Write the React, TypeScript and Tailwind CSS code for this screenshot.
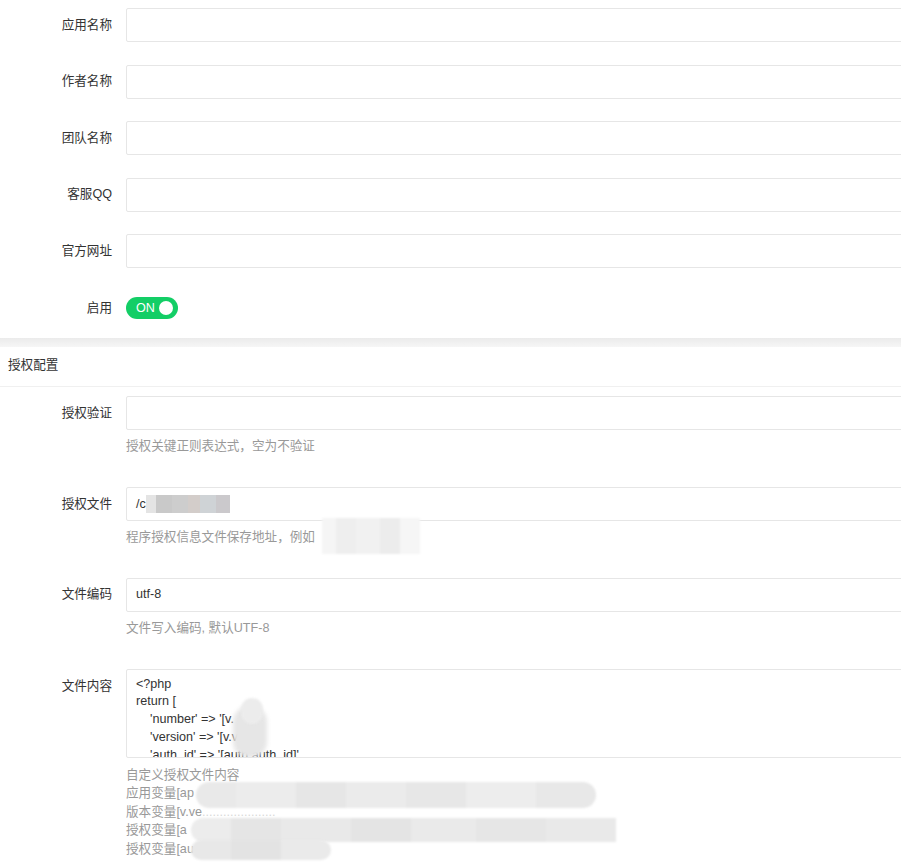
import React from "react";

const FONT = { fontFamily: '"Liberation Sans", "Noto Sans CJK SC", sans-serif' };

function Row({ label, value, children }: { label: string; value?: string; children?: React.ReactNode }) {
  return (
    <div className="flex items-center h-[34px]">
      <div className="w-[126px] shrink-0 pr-[14px] text-right text-[12.6px] text-[#333]">{label}</div>
      <div className="relative h-[34px] w-[800px] shrink-0 rounded-[2px] border border-[#e6e6e6] bg-white pl-[9px] flex items-center text-[12.6px] text-[#333]">
        {value}
        {children}
      </div>
    </div>
  );
}

function Help({ children }: { children: React.ReactNode }) {
  return <div className="relative ml-[126px] mt-[7px] h-[18px] leading-[18px] text-[12.6px] text-[#999]">{children}</div>;
}

export default function App() {
  return (
    <div className="w-[901px] h-[865px] overflow-hidden bg-[#f2f2f2]" style={FONT}>
      {/* basic info card */}
      <div className="bg-white pt-[8px] pb-[13.5px]">
        <div className="flex flex-col gap-[22.6px]">
          <Row label="应用名称" />
          <Row label="作者名称" />
          <Row label="团队名称" />
          <Row label="客服QQ" />
          <Row label="官方网址" />
          <div className="flex items-center h-[34px]">
            <div className="w-[126px] shrink-0 pr-[14px] text-right text-[12.6px] text-[#333]">启用</div>
            <div className="flex items-center h-[22px] w-[52px] rounded-full bg-[#13ce66] pl-[10px] pr-[5px]">
              <span className="text-[12.6px] text-white leading-none">ON</span>
              <span className="ml-auto h-[14px] w-[14px] rounded-full bg-white" />
            </div>
          </div>
        </div>
      </div>
      <div className="h-[9px] bg-gradient-to-b from-[#ebebeb] to-[#f6f6f6]" />
      {/* auth config card */}
      <div className="bg-white h-[520px]">
        <div className="h-[40px] flex items-center pl-[8px] pb-[3px] border-b border-[#f0f0f0] text-[12.6px] text-[#333]">授权配置</div>
        <div className="pt-[9px]">
          <Row label="授权验证" />
          <Help>授权关键正则表达式，空为不验证</Help>
          <div className="h-[31.7px]" />
          <Row label="授权文件">
            <span>/c</span>
            <span className="flex h-[18px] blur-[0.5px]">
              <span className="w-[10px] bg-[#e4e4e4]" />
              <span className="w-[16px] bg-[#c9c9c9]" />
              <span className="w-[16px] bg-[#cdcdcd]" />
              <span className="w-[12px] bg-[#d3cdca]" />
              <span className="w-[16px] bg-[#cfd3d6]" />
              <span className="w-[14px] bg-[#cbc9cc]" />
            </span>
          </Row>
          <Help>
            程序授权信息文件保存地址，例如
            <span className="absolute left-[196px] top-[-10px] flex h-[36px] w-[98px] blur-[1px]">
              <span className="w-[14px] bg-[#f5f5f5]" />
              <span className="w-[20px] bg-[#eeeeee]" />
              <span className="w-[24px] bg-[#f1f1f1]" />
              <span className="w-[20px] bg-[#ececec]" />
              <span className="w-[20px] bg-[#f6f6f6]" />
            </span>
          </Help>
          <div className="h-[31.7px]" />
          <Row label="文件编码" value="utf-8" />
          <Help>文件写入编码, 默认UTF-8</Help>
          <div className="h-[31.7px]" />
          <div className="flex items-start">
            <div className="w-[126px] shrink-0 pr-[14px] pt-[8px] text-right text-[12.6px] leading-[18px] text-[#333]">文件内容</div>
            <div className="relative h-[89px] w-[800px] shrink-0 overflow-hidden rounded-[2px] border border-[#e6e6e6] bg-white pl-[9px] pt-[6px] text-[12.6px] leading-[17.8px] text-[#333] whitespace-pre">
              <div>{"<?php"}</div>
              <div>{"return ["}</div>
              <div>{"    'number' => '[v."}</div>
              <div>{"    'version' => '[v.ver"}</div>
              <div>{"    'auth_id' => '[auth.auth_id]'"}</div>
              <div className="absolute left-[106px] top-[36px] h-[52px] w-[34px] rounded-[16px] bg-[#e6e6e6] blur-[2px]" />
              <div className="absolute left-[114px] top-[28px] h-[26px] w-[22px] rounded-full bg-[#ececec] blur-[1px]" />
            </div>
          </div>
          <div className="relative ml-[126px] mt-[8px] text-[12.6px] leading-[18.6px] text-[#999]">
            <div>自定义授权文件内容</div>
            <div>应用变量[ap</div>
            <div>版本变量[v.ve<span className="text-[#d8d8d8]">.....................</span></div>
            <div>授权变量[a</div>
            <div>授权变量[au</div>
            <div className="absolute left-[70px] top-[16px] flex h-[26px] w-[400px] overflow-hidden rounded-[13px] blur-[1px]">
              <span className="w-[40px] bg-[#e9e9e9]" />
              <span className="w-[60px] bg-[#ececec]" />
              <span className="w-[50px] bg-[#e6e6e6]" />
              <span className="w-[60px] bg-[#ebebeb]" />
              <span className="w-[60px] bg-[#e7e7e7]" />
              <span className="w-[70px] bg-[#ededed]" />
              <span className="w-[60px] bg-[#e8e8e8]" />
            </div>
            <div className="absolute left-[65px] top-[52px] flex h-[24px] w-[425px] overflow-hidden rounded-l-[12px] blur-[1px]">
              <span className="w-[40px] bg-[#ececec]" />
              <span className="w-[50px] bg-[#e5e5e5]" />
              <span className="w-[70px] bg-[#e9e9e9]" />
              <span className="w-[60px] bg-[#e4e4e4]" />
              <span className="w-[65px] bg-[#eaeaea]" />
              <span className="w-[70px] bg-[#e6e6e6]" />
              <span className="w-[70px] bg-[#e9e9e9]" />
            </div>
            <div className="absolute left-[65px] top-[74px] flex h-[20px] w-[140px] overflow-hidden rounded-[10px] blur-[1px]">
              <span className="w-[40px] bg-[#e8e8e8]" />
              <span className="w-[50px] bg-[#e3e3e3]" />
              <span className="w-[50px] bg-[#eaeaea]" />
            </div>
          </div>
        </div>
      </div>
    </div>
  );
}
